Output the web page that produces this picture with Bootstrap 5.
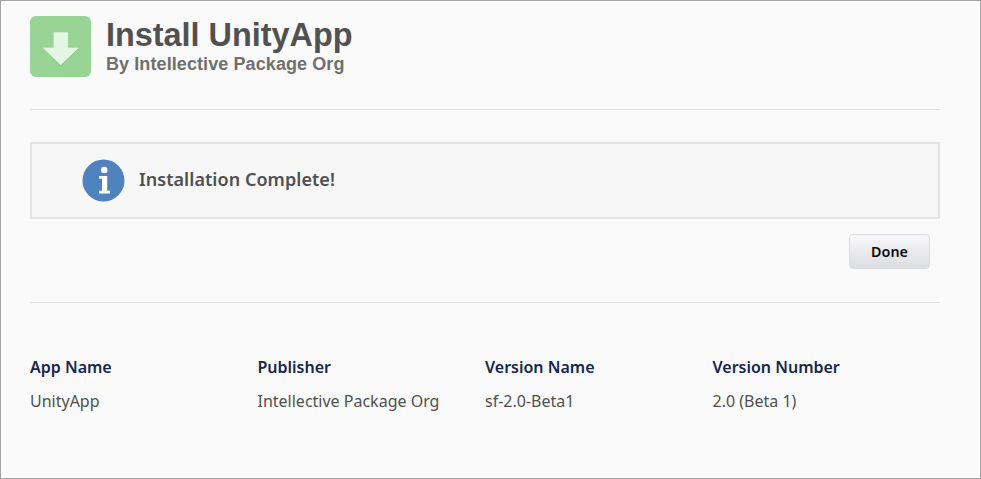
<!DOCTYPE html>
<html lang="en">
<head>
<meta charset="utf-8">
<meta name="viewport" content="width=device-width, initial-scale=1">
<title>Install UnityApp</title>
<link href="https://cdn.jsdelivr.net/npm/bootstrap@5.3.0/dist/css/bootstrap.min.css" rel="stylesheet">
<style>
body { height: 479px; overflow: hidden; background: #fafafa; border: 1px solid #a3a3a3; box-shadow: inset 0 0 0 2px #fff; font-family: "Noto Sans", sans-serif; color: #505050; padding: 15px 40px 0 29px; }
.app-icon { width: 61px; height: 61px; margin-right: 15px; }
.app-heading { padding-top: 1px; }
.app-title { font: bold 32.4px/37px "Liberation Sans", Arial, sans-serif; color: #515151; }
.app-org { font: bold 18px/20px "Liberation Sans", Arial, sans-serif; letter-spacing: .09px; color: #6f6f6f; }
.rule { height: 1px; background: #e0e0e0; }
.head-rule { margin-top: 32px; }
.notice { height: 77px; margin-top: 32px; padding-left: 50px; background: #f7f7f7; border: 2px solid #e3e3e3; }
.notice-text { font-size: 18px; line-height: 24px; font-weight: 600; letter-spacing: .05px; margin: 0 0 3px 14px; }
.btn-done { width: 81px; height: 35px; margin: 15px 10px 33px 0; padding: 0; border: 1px solid #dcdde0; border-radius: 4px; background: linear-gradient(#f8f8fa, #dcdde0); color: #080808; font-size: 14.3px; font-weight: 600; line-height: 33px; }
.details { margin-top: 52px; font-size: 16px; }
.details dt { color: #16264c; font-weight: 600; line-height: 24px; margin-bottom: 10px; }
.details dd { line-height: 24px; margin: 0; white-space: nowrap; }
</style>
</head>
<body>
<header class="d-flex align-items-start">
  <svg class="app-icon flex-shrink-0" viewBox="0 0 61 61" aria-hidden="true">
    <rect width="61" height="61" rx="6" fill="#98d494"/>
    <path d="M23.5 17.3h14.5v15h11L30.7 50.5 12.5 32.3h11z" fill="#70b56d" opacity=".6"/>
    <path d="M23.5 16.3h14.5v15.4h11L30.7 49.3 12.5 31.7h11z" fill="#e4f5e3"/>
  </svg>
  <div class="app-heading">
    <h1 class="app-title m-0">Install UnityApp</h1>
    <p class="app-org m-0">By Intellective Package Org</p>
  </div>
</header>
<div class="rule head-rule"></div>
<section class="notice d-flex align-items-center">
  <svg width="43" height="43" viewBox="0 0 43 43" aria-hidden="true">
    <circle cx="21.5" cy="21.5" r="21" fill="#4f82be"/>
    <circle cx="22.2" cy="11" r="3.3" fill="#fff"/>
    <path d="M17 17h8.2v14.8h2.8v2.8H17v-2.8h3V19.8h-3z" fill="#fff"/>
  </svg>
  <span class="notice-text">Installation Complete!</span>
</section>
<div class="d-flex justify-content-end"><button type="button" class="btn btn-done">Done</button></div>
<div class="rule"></div>
<div class="details row g-0">
  <dl class="col-3 m-0"><dt>App Name</dt><dd>UnityApp</dd></dl>
  <dl class="col-3 m-0"><dt>Publisher</dt><dd>Intellective Package Org</dd></dl>
  <dl class="col-3 m-0"><dt>Version Name</dt><dd>sf-2.0-Beta1</dd></dl>
  <dl class="col-3 m-0"><dt>Version Number</dt><dd>2.0 (Beta 1)</dd></dl>
</div>
<script src="https://cdn.jsdelivr.net/npm/bootstrap@5.3.0/dist/js/bootstrap.bundle.min.js"></script>
</body>
</html>
